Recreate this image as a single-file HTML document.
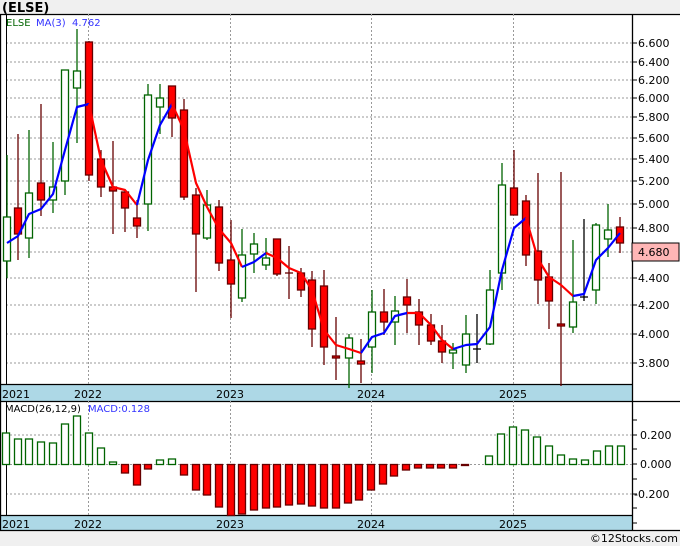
<!DOCTYPE html>
<html><head><meta charset="utf-8"><style>
body{margin:0;width:680px;height:546px;background:#f0f0f0;overflow:hidden;font-family:"Liberation Sans",sans-serif}
svg{display:block}
text{font-family:"DejaVu Sans","Liberation Sans",sans-serif;font-size:11px}
</style></head><body>
<svg width="680" height="546" viewBox="0 0 680 546">
<rect x="0" y="0" width="680" height="546" fill="#f0f0f0"/>
<text x="2" y="12" font-weight="bold" font-size="13" style="font-size:13px">(ELSE)</text>
<rect x="0" y="14" width="680" height="517" fill="#fff"/>
<rect x="0" y="385" width="632" height="16" fill="#add8e6"/>
<rect x="0" y="515" width="632" height="16" fill="#add8e6"/>
<g stroke="#000" stroke-width="1.3" fill="none">
<line x1="0" y1="14.5" x2="680" y2="14.5"/>
<line x1="0" y1="384.5" x2="632" y2="384.5"/>
<line x1="0" y1="401.5" x2="680" y2="401.5"/>
<line x1="0" y1="515.5" x2="632" y2="515.5"/>
<line x1="0" y1="530.5" x2="680" y2="530.5"/>
<line x1="632.5" y1="14" x2="632.5" y2="531"/>
<line x1="0.5" y1="14" x2="0.5" y2="531"/>
</g>
<g stroke="#999" stroke-dasharray="2,2" stroke-width="1">
<line x1="6" y1="43" x2="632" y2="43"/><line x1="6" y1="62" x2="632" y2="62"/><line x1="6" y1="80" x2="632" y2="80"/><line x1="6" y1="98" x2="632" y2="98"/><line x1="6" y1="117" x2="632" y2="117"/><line x1="6" y1="138" x2="632" y2="138"/><line x1="6" y1="159" x2="632" y2="159"/><line x1="6" y1="181" x2="632" y2="181"/><line x1="6" y1="204" x2="632" y2="204"/><line x1="6" y1="228" x2="632" y2="228"/><line x1="6" y1="252" x2="632" y2="252"/><line x1="6" y1="278" x2="632" y2="278"/><line x1="6" y1="305" x2="632" y2="305"/><line x1="6" y1="334" x2="632" y2="334"/><line x1="6" y1="363" x2="632" y2="363"/>
<line x1="88.5" y1="14" x2="88.5" y2="384"/><line x1="230.5" y1="14" x2="230.5" y2="384"/><line x1="371.5" y1="14" x2="371.5" y2="384"/><line x1="513.5" y1="14" x2="513.5" y2="384"/>
<line x1="6" y1="435" x2="632" y2="435"/><line x1="6" y1="464.5" x2="632" y2="464.5"/><line x1="6" y1="494" x2="632" y2="494"/>
<line x1="88.5" y1="401" x2="88.5" y2="515"/><line x1="230.5" y1="401" x2="230.5" y2="515"/><line x1="371.5" y1="401" x2="371.5" y2="515"/><line x1="513.5" y1="401" x2="513.5" y2="515"/>
</g>
<line x1="6.5" y1="14" x2="6.5" y2="384" stroke="#000"/>
<line x1="6.5" y1="401" x2="6.5" y2="515" stroke="#000"/>
<g stroke="#000">
<line x1="632" y1="43" x2="637" y2="43"/><line x1="632" y1="62" x2="637" y2="62"/><line x1="632" y1="80" x2="637" y2="80"/><line x1="632" y1="98" x2="637" y2="98"/><line x1="632" y1="117" x2="637" y2="117"/><line x1="632" y1="138" x2="637" y2="138"/><line x1="632" y1="159" x2="637" y2="159"/><line x1="632" y1="181" x2="637" y2="181"/><line x1="632" y1="204" x2="637" y2="204"/><line x1="632" y1="228" x2="637" y2="228"/><line x1="632" y1="278" x2="637" y2="278"/><line x1="632" y1="305" x2="637" y2="305"/><line x1="632" y1="334" x2="637" y2="334"/><line x1="632" y1="363" x2="637" y2="363"/>
<line x1="632" y1="420" x2="637" y2="420"/><line x1="632" y1="435" x2="637" y2="435"/><line x1="632" y1="449" x2="637" y2="449"/><line x1="632" y1="464" x2="637" y2="464"/><line x1="632" y1="479" x2="637" y2="479"/><line x1="632" y1="494" x2="637" y2="494"/><line x1="632" y1="508" x2="637" y2="508"/><line x1="632" y1="523" x2="637" y2="523"/>
</g>
<g fill="#000">
<text x="638" y="47">6.600</text><text x="638" y="66">6.400</text><text x="638" y="84">6.200</text><text x="638" y="102">6.000</text><text x="638" y="121">5.800</text><text x="638" y="142">5.600</text><text x="638" y="163">5.400</text><text x="638" y="185">5.200</text><text x="638" y="208">5.000</text><text x="638" y="232">4.800</text><text x="638" y="282">4.400</text><text x="638" y="309">4.200</text><text x="638" y="338">4.000</text><text x="638" y="367">3.800</text>
<text x="640" y="439">0.200</text><text x="640" y="468">0.000</text><text x="634" y="498">-0.200</text>
</g>
<rect x="632" y="243" width="47" height="18" fill="#ffb6b6" stroke="#000"/>
<text x="638" y="256">4.680</text>
<g fill="#000">
<text x="2" y="398">2021</text><text x="74" y="398">2022</text><text x="216" y="398">2023</text><text x="357" y="398">2024</text><text x="499" y="398">2025</text>
<text x="2" y="528">2021</text><text x="74" y="528">2022</text><text x="216" y="528">2023</text><text x="357" y="528">2024</text><text x="499" y="528">2025</text>
</g>
<text x="6" y="26" fill="#006400" style="font-size:10px">ELSE</text>
<text x="36" y="26" fill="#3333ff" style="font-size:10px">MA(3)</text>
<text x="72" y="26" fill="#3333ff" style="font-size:10px">4.762</text>
<text x="5" y="412" fill="#000" style="font-size:10px">MACD(26,12,9)</text>
<text x="88" y="412" fill="#3333ff" style="font-size:10px">MACD:0.128</text>
<text x="678" y="542" text-anchor="end" fill="#000" style="font-size:11px">©12Stocks.com</text>

<g stroke="#006400" stroke-width="1.3">
<line x1="7" y1="155" x2="7" y2="278"/><line x1="29" y1="130" x2="29" y2="258"/><line x1="53" y1="142" x2="53" y2="213"/><line x1="65" y1="70" x2="65" y2="195"/><line x1="77" y1="29" x2="77" y2="143"/><line x1="148" y1="84" x2="148" y2="231"/><line x1="160" y1="84" x2="160" y2="134"/><line x1="207" y1="190" x2="207" y2="240"/><line x1="242" y1="229" x2="242" y2="302"/><line x1="254" y1="233" x2="254" y2="273"/><line x1="266" y1="238" x2="266" y2="270"/><line x1="349" y1="334" x2="349" y2="388"/><line x1="372" y1="290" x2="372" y2="373"/><line x1="395" y1="296" x2="395" y2="345"/><line x1="453" y1="343" x2="453" y2="369"/><line x1="466" y1="315" x2="466" y2="373"/><line x1="490" y1="270" x2="490" y2="345"/><line x1="502" y1="163" x2="502" y2="290"/><line x1="573" y1="240" x2="573" y2="333"/><line x1="596" y1="223" x2="596" y2="304"/><line x1="608" y1="204" x2="608" y2="257"/>
</g>
<g stroke="#660000" stroke-width="1.3">
<line x1="18" y1="134" x2="18" y2="260"/><line x1="41" y1="104" x2="41" y2="216"/><line x1="89" y1="41" x2="89" y2="181"/><line x1="101" y1="150" x2="101" y2="197"/><line x1="113" y1="141" x2="113" y2="234"/><line x1="125" y1="190" x2="125" y2="232"/><line x1="137" y1="200" x2="137" y2="238"/><line x1="172" y1="86" x2="172" y2="137"/><line x1="184" y1="99" x2="184" y2="200"/><line x1="196" y1="188" x2="196" y2="292"/><line x1="219" y1="200" x2="219" y2="271"/><line x1="231" y1="220" x2="231" y2="318"/><line x1="277" y1="239" x2="277" y2="276"/><line x1="289" y1="246" x2="289" y2="299"/><line x1="301" y1="268" x2="301" y2="297"/><line x1="312" y1="271" x2="312" y2="347"/><line x1="324" y1="270" x2="324" y2="365"/><line x1="336" y1="317" x2="336" y2="380"/><line x1="361" y1="339" x2="361" y2="383"/><line x1="384" y1="289" x2="384" y2="335"/><line x1="407" y1="279" x2="407" y2="333"/><line x1="419" y1="299" x2="419" y2="345"/><line x1="431" y1="314" x2="431" y2="345"/><line x1="442" y1="325" x2="442" y2="363"/><line x1="514" y1="150" x2="514" y2="215"/><line x1="526" y1="195" x2="526" y2="266"/><line x1="538" y1="173" x2="538" y2="304"/><line x1="549" y1="263" x2="549" y2="329"/><line x1="561" y1="172" x2="561" y2="386"/><line x1="620" y1="217" x2="620" y2="253"/>
</g>
<g stroke="#000" stroke-width="1.3">
<line x1="477" y1="314" x2="477" y2="363"/><line x1="473" y1="349" x2="481" y2="349"/>
<line x1="584" y1="219" x2="584" y2="301"/><line x1="580" y1="297" x2="588" y2="297"/>
<line x1="285" y1="273" x2="293" y2="273" stroke="#660000"/>
</g>
<g fill="#fff" stroke="#006400" stroke-width="1.3">
<rect x="3.5" y="217" width="7" height="44"/><rect x="25.5" y="193" width="7" height="45"/><rect x="49.5" y="187" width="7" height="13"/><rect x="61.5" y="70" width="7" height="111"/><rect x="73.5" y="71" width="7" height="17"/><rect x="144.5" y="95" width="7" height="109"/><rect x="156.5" y="98" width="7" height="9"/><rect x="203.5" y="205" width="7" height="33"/><rect x="238.5" y="255" width="7" height="43"/><rect x="250.5" y="244" width="7" height="10"/><rect x="262.5" y="258" width="7" height="7"/><rect x="345.5" y="338" width="7" height="20"/><rect x="368.5" y="312" width="7" height="35"/><rect x="391.5" y="311" width="7" height="11"/><rect x="449.5" y="350" width="7" height="3"/><rect x="462.5" y="334" width="7" height="31"/><rect x="486.5" y="290" width="7" height="54"/><rect x="498.5" y="185" width="7" height="88"/><rect x="569.5" y="302" width="7" height="25"/><rect x="592.5" y="225" width="7" height="65"/><rect x="604.5" y="230" width="7" height="9"/>
</g>
<g fill="#ff0000" stroke="#660000" stroke-width="1.3">
<rect x="14.5" y="208" width="7" height="26"/><rect x="37.5" y="183" width="7" height="17"/><rect x="85.5" y="42" width="7" height="133"/><rect x="97.5" y="159" width="7" height="28"/><rect x="109.5" y="187" width="7" height="4"/><rect x="121.5" y="192" width="7" height="16"/><rect x="133.5" y="218" width="7" height="8"/><rect x="168.5" y="86" width="7" height="32"/><rect x="180.5" y="110" width="7" height="87"/><rect x="192.5" y="195" width="7" height="39"/><rect x="215.5" y="207" width="7" height="56"/><rect x="227.5" y="260" width="7" height="24"/><rect x="273.5" y="239" width="7" height="35"/><rect x="297.5" y="273" width="7" height="17"/><rect x="308.5" y="280" width="7" height="49"/><rect x="320.5" y="286" width="7" height="61"/><rect x="332.5" y="356" width="7" height="2"/><rect x="357.5" y="361" width="7" height="3"/><rect x="380.5" y="312" width="7" height="10"/><rect x="403.5" y="297" width="7" height="8"/><rect x="415.5" y="312" width="7" height="13"/><rect x="427.5" y="325" width="7" height="16"/><rect x="438.5" y="341" width="7" height="11"/><rect x="510.5" y="188" width="7" height="27"/><rect x="522.5" y="201" width="7" height="54"/><rect x="534.5" y="251" width="7" height="29"/><rect x="545.5" y="277" width="7" height="24"/><rect x="557.5" y="324" width="7" height="2"/><rect x="616.5" y="227" width="7" height="16"/>
</g>
<g fill="none" stroke-width="2.2" stroke-linejoin="round">
<polyline stroke="#0000ff" points="7,243 18,236 29,214 41,209 53,194 65,150 77,107 89,104"/>
<polyline stroke="#ff0000" points="89,104 101,160 113,187 125,190 137,205"/>
<polyline stroke="#0000ff" points="137,205 148,160 160,125 172,104"/>
<polyline stroke="#ff0000" points="172,104 184,130 196,183 207,207 219,229 231,243 242,267"/>
<polyline stroke="#0000ff" points="242,267 254,262 266,253"/>
<polyline stroke="#ff0000" points="266,253 277,258 289,268 301,273 312,290 324,330 336,345 349,349 361,353"/>
<polyline stroke="#0000ff" points="361,353 372,337 384,333 395,316 407,313"/>
<polyline stroke="#ff0000" points="407,313 419,313 431,325 442,340 453,349"/>
<polyline stroke="#0000ff" points="453,349 466,345 477,344 490,327 502,270 514,228 526,218"/>
<polyline stroke="#ff0000" points="526,218 538,259 549,277 561,285 573,296"/>
<polyline stroke="#0000ff" points="573,296 584,294 596,260 608,248 620,233"/>
</g>
<g fill="#fff" stroke="#006400" stroke-width="1.3">
<rect x="2.5" y="433" width="7" height="31.5"/><rect x="14.5" y="439" width="7" height="25.5"/><rect x="25.5" y="439" width="7" height="25.5"/><rect x="37.5" y="442" width="7" height="22.5"/><rect x="49.5" y="443" width="7" height="21.5"/><rect x="61.5" y="424" width="7" height="40.5"/><rect x="73.5" y="416" width="7" height="48.5"/><rect x="85.5" y="433" width="7" height="31.5"/><rect x="97.5" y="448" width="7" height="16.5"/><rect x="109.5" y="462" width="7" height="2.5"/><rect x="156.5" y="460" width="7" height="4.5"/><rect x="168.5" y="459" width="7" height="5.5"/><rect x="485.5" y="456" width="7" height="8.5"/><rect x="497.5" y="434" width="7" height="30.5"/><rect x="509.5" y="427" width="7" height="37.5"/><rect x="521.5" y="430" width="7" height="34.5"/><rect x="533.5" y="437" width="7" height="27.5"/><rect x="545.5" y="446" width="7" height="18.5"/><rect x="557.5" y="455" width="7" height="9.5"/><rect x="569.5" y="459" width="7" height="5.5"/><rect x="581.5" y="460" width="7" height="4.5"/><rect x="593.5" y="451" width="7" height="13.5"/><rect x="605.5" y="446" width="7" height="18.5"/><rect x="617.5" y="446" width="7" height="18.5"/>
</g>
<g fill="#ff0000" stroke="#660000" stroke-width="1.3">
<rect x="121.5" y="464.5" width="7" height="8.5"/><rect x="133.5" y="464.5" width="7" height="20.5"/><rect x="144.5" y="464.5" width="7" height="4.5"/><rect x="180.5" y="464.5" width="7" height="10.5"/><rect x="192.5" y="464.5" width="7" height="25.5"/><rect x="203.5" y="464.5" width="7" height="30.5"/><rect x="215.5" y="464.5" width="7" height="42.5"/><rect x="227.5" y="464.5" width="7" height="51"/><rect x="238.5" y="464.5" width="7" height="49.5"/><rect x="250.5" y="464.5" width="7" height="45.5"/><rect x="262.5" y="464.5" width="7" height="43.5"/><rect x="273.5" y="464.5" width="7" height="42.5"/><rect x="285.5" y="464.5" width="7" height="40.5"/><rect x="297.5" y="464.5" width="7" height="39.5"/><rect x="308.5" y="464.5" width="7" height="41.5"/><rect x="320.5" y="464.5" width="7" height="43.5"/><rect x="332.5" y="464.5" width="7" height="43.5"/><rect x="344.5" y="464.5" width="7" height="38.5"/><rect x="355.5" y="464.5" width="7" height="35.5"/><rect x="367.5" y="464.5" width="7" height="25.5"/><rect x="379.5" y="464.5" width="7" height="19.5"/><rect x="390.5" y="464.5" width="7" height="11.5"/><rect x="402.5" y="464.5" width="7" height="5.5"/><rect x="414.5" y="464.5" width="7" height="3.5"/><rect x="426.5" y="464.5" width="7" height="3.5"/><rect x="437.5" y="464.5" width="7" height="3.5"/><rect x="449.5" y="464.5" width="7" height="3.5"/><rect x="461.5" y="464.5" width="7" height="1"/>
</g>
</svg>
</body></html>
